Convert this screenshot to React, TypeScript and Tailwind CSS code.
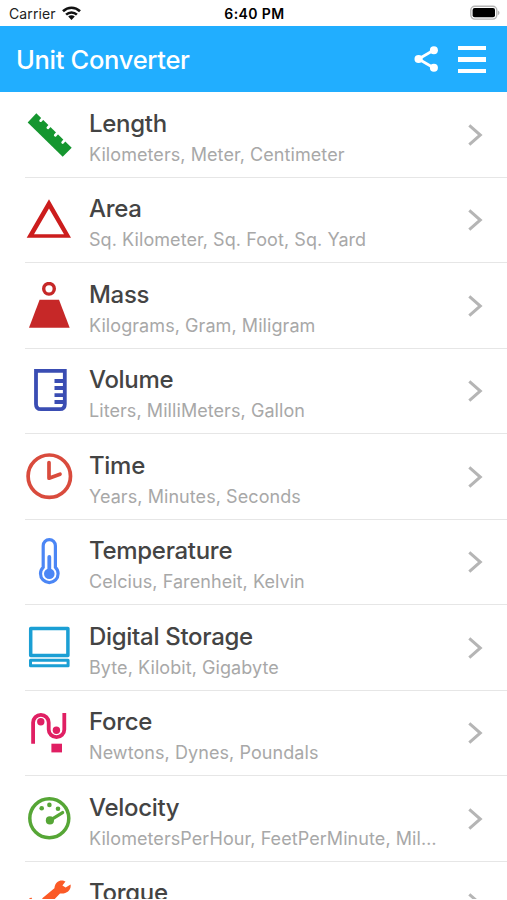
import type { ReactNode } from 'react';

interface Unit {
  name: string;
  hint: string;
  icon: ReactNode;
}

const units: Unit[] = [
  {
    name: 'Length',
    hint: 'Kilometers, Meter, Centimeter',
    icon: (
      <>
        <path fill="#15962f" d="M2.7 11.5 11.3 2.2 46.7 36.7 37.7 45.8z" />
        <path
          stroke="#fff"
          strokeWidth={2.8}
          strokeLinecap="round"
          d="M18.5 6.5 15.7 9.6M25.7 13.7 22.9 16.8M33.1 21.1 30.3 24.2M40.5 28.3 37.7 31.4"
        />
      </>
    ),
  },
  {
    name: 'Area',
    hint: 'Sq. Kilometer, Sq. Foot, Sq. Yard',
    icon: (
      <path
        fill="#cc1d1d"
        fillRule="evenodd"
        d="M24 3.3 46 41.7H1.7zM24 12.5 9 38.2H39z"
      />
    ),
  },
  {
    name: 'Mass',
    hint: 'Kilograms, Gram, Miligram',
    icon: (
      <>
        <circle cx="24" cy="6.8" r="5.3" stroke="#c62828" strokeWidth={3.4} />
        <path fill="#c62828" d="M14.6 17.8H34L44.7 45.8H4z" />
      </>
    ),
  },
  {
    name: 'Volume',
    hint: 'Liters, MilliMeters, Gallon',
    icon: (
      <path
        stroke="#3a4db3"
        strokeWidth={3.8}
        d="M11 3.8H39.8V37.2Q39.8 42.2 34.8 42.2H16Q11 42.2 11 37.2zM29.5 14H39M29.5 21H39M29.5 28.2H39M29.5 35H39"
      />
    ),
  },
  {
    name: 'Time',
    hint: 'Years, Minutes, Seconds',
    icon: (
      <g stroke="#d94b3d" strokeWidth={3.7} strokeLinecap="round" strokeLinejoin="round">
        <circle cx="24.3" cy="23.2" r="21.2" />
        <path d="M24 9.5V25.2L35 21.2" />
      </g>
    ),
  },
  {
    name: 'Temperature',
    hint: 'Celcius, Farenheit, Kelvin',
    icon: (
      <>
        <path
          stroke="#4b86f5"
          strokeWidth={3.2}
          d="M18.2 29.4V7.8a6.1 6.1 0 0 1 12.2 0V29.4a8.8 8.8 0 1 1-12.2 0z"
        />
        <path stroke="#4b86f5" strokeWidth={3.8} strokeLinecap="round" d="M24.3 19V34" />
        <circle cx="24.3" cy="35.8" r="5.3" fill="#4b86f5" />
      </>
    ),
  },
  {
    name: 'Digital Storage',
    hint: 'Byte, Kilobit, Gigabyte',
    icon: (
      <g stroke="#1b9fd4" strokeLinejoin="round">
        <rect x="5.7" y="4.5" width="37.2" height="27" strokeWidth={3.5} />
        <rect x="5.5" y="36.2" width="37.6" height="5.6" strokeWidth={3} />
      </g>
    ),
  },
  {
    name: 'Force',
    hint: 'Newtons, Dynes, Poundals',
    icon: (
      <>
        <path
          stroke="#e01f63"
          strokeWidth={3.8}
          d="M8.1 34.7V13.6a7.8 7.8 0 0 1 15.6 0V20.4a7.8 7.8 0 0 0 15.6 0V4"
        />
        <circle cx="15.8" cy="12.8" r="3.7" fill="#e01f63" />
        <circle cx="31.4" cy="21.3" r="3.7" fill="#e01f63" />
        <rect x="26.4" y="34.7" width="10.6" height="8.7" fill="#e01f63" />
      </>
    ),
  },
  {
    name: 'Velocity',
    hint: 'KilometersPerHour, FeetPerMinute, MilesPerHour',
    icon: (
      <>
        <circle cx="24.3" cy="23.2" r="19.5" stroke="#56a636" strokeWidth={3.5} />
        <path stroke="#56a636" strokeWidth={3.3} strokeLinecap="round" d="M25 25.3 37.6 17.6" />
        <g fill="#56a636">
          <circle cx="24.9" cy="25.4" r="4.1" />
          <circle cx="16.7" cy="13.2" r="2.3" />
          <circle cx="24.4" cy="9.9" r="2.3" />
          <circle cx="33" cy="13.8" r="2.3" />
        </g>
      </>
    ),
  },
  {
    name: 'Torque',
    hint: 'NewtonMeter, PoundFoot',
    icon: (
      <>
        <path
          fill="#fb5a26"
          d="M40.5 1.6C37.5-.6 30.5-.4 29.4 8.2L17 18.5 25.5 23.5 35 13.4C41 14.4 46.5 10.4 45.6 4.4L40.6 7.4 37.4 5.4z"
        />
        <path fill="#fb5a26" d="M4 18.8 6.3 17.4 8 20.5H4z" />
      </>
    ),
  },
];

function StatusBar() {
  return (
    <div className="grid h-[25.5px] shrink-0 grid-cols-3 items-center pl-[9px] pr-[7px] text-[14px] text-[#222]">
      <div className="mt-px flex items-center gap-[6px]">
        <span className="tracking-[0.1px]">Carrier</span>
        <svg className="-mt-px h-[14px] w-[19px]" viewBox="0 0 19 14" fill="none">
          <path stroke="#111" strokeWidth={2.6} d="M1 5.3C5.9.6 13.1.6 18 5.3M4.1 8.6C7.2 5.7 11.8 5.7 14.9 8.6" />
          <path fill="#111" d="M6.2 10.6C8 8.9 11 8.9 12.8 10.6L9.5 13.9z" />
        </svg>
      </div>
      <span className="mt-px text-center font-semibold tracking-[0.4px] text-black">6:40 PM</span>
      <svg className="h-[15px] w-[31px] justify-self-end" viewBox="0 0 31 15" fill="none">
        <rect x="1.8" y="1.3" width="26" height="12.8" rx="4" fill="#fff" stroke="#b5b5b5" strokeWidth={1.4} />
        <rect x="3.6" y="3.1" width="22.4" height="9.2" rx="2" fill="#000" />
        <path fill="#b5b5b5" d="M28.9 5.4C31 6.2 31 9.2 28.9 10z" />
      </svg>
    </div>
  );
}

function Header() {
  return (
    <header className="flex h-[66px] shrink-0 items-center bg-[#21aeff] pl-4 pr-[21px] text-white">
      <h1 className="mt-[3px] flex-1 text-[25.5px] font-medium tracking-[-0.3px]">Unit Converter</h1>
      <button className="mr-[19px] mt-px">
        <svg className="h-[28px] w-[26px]" viewBox="0 0 26 28" fill="none">
          <path stroke="#fff" strokeWidth={2.8} d="M21 5 5.5 14 21 23" />
          <circle cx="5.6" cy="14" r="4.1" fill="#fff" />
          <circle cx="20.9" cy="5.2" r="4" fill="#fff" />
          <circle cx="20.9" cy="22.8" r="4" fill="#fff" />
        </svg>
      </button>
      <button className="mt-[2px] flex w-[28px] flex-col gap-[7px]">
        <span className="h-[4.3px] bg-white" />
        <span className="h-[4.3px] bg-white" />
        <span className="h-[4.3px] bg-white" />
      </button>
    </header>
  );
}

function UnitRow({ unit }: { unit: Unit }) {
  return (
    <li className="ml-[25px] flex h-[85.5px] shrink-0 items-center border-b border-[#e6e6e6]">
      <svg className="mt-px h-[48px] w-[48px] shrink-0" viewBox="0 0 48 48" fill="none">
        {unit.icon}
      </svg>
      <div className="ml-4 w-[350px] pt-[10px]">
        <div className="text-[24px] leading-[30px] font-medium tracking-[-0.3px] text-[#444]">{unit.name}</div>
        <div className="truncate text-[18px] leading-[31px] tracking-[0.07px] text-[#a8a8a8]">{unit.hint}</div>
      </div>
      <svg className="mt-px ml-[28px] h-[24px] w-[16px] shrink-0" viewBox="0 0 16 24" fill="none">
        <path stroke="#b5b5b5" strokeWidth={3} d="M2.3 2.3 13.3 12 2.3 21.7" />
      </svg>
    </li>
  );
}

export default function App() {
  return (
    <div className="flex h-[900px] w-[507px] flex-col overflow-hidden bg-white font-['Inter','Liberation_Sans',sans-serif]">
      <StatusBar />
      <Header />
      <ul className="mb-px flex min-h-0 flex-1 flex-col overflow-hidden pt-[0.5px]">
        {units.map((unit) => (
          <UnitRow key={unit.name} unit={unit} />
        ))}
      </ul>
    </div>
  );
}
